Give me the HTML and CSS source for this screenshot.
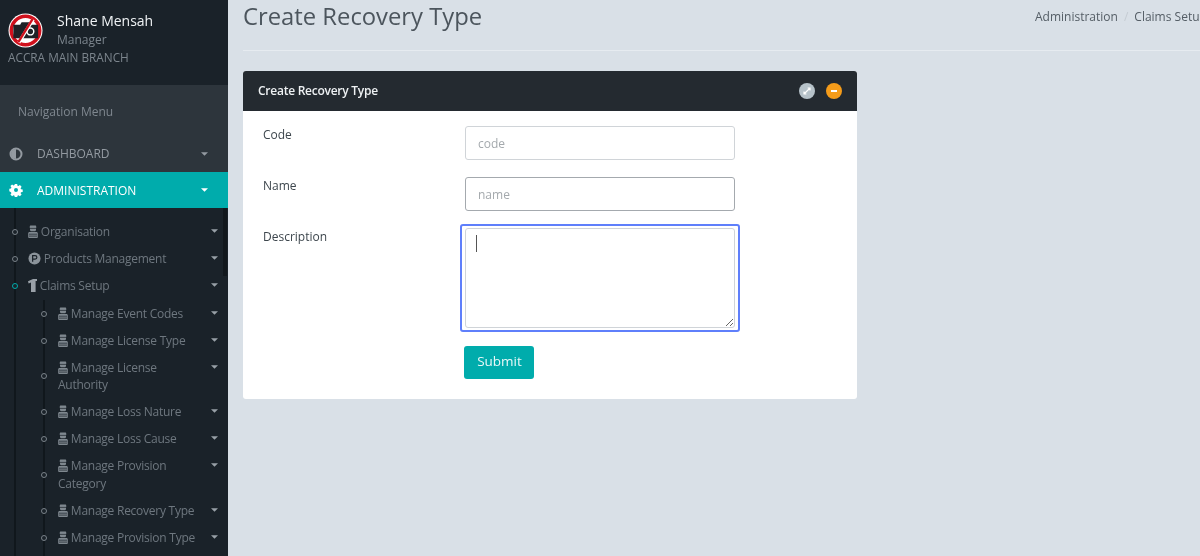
FILE: index.html
```html
<!DOCTYPE html>
<html lang="en">
<head>
<meta charset="utf-8">
<title>Create Recovery Type</title>
<link rel="stylesheet" href="styles.css">
</head>
<body>
<svg class="defs" width="0" height="0" aria-hidden="true">
  <symbol id="bust" viewBox="0 0 10 13">
    <path d="M2.200 0.600h5.600l.7 1.600-.5.5v2.600l-.8 1H2.800l-.8-1V2.700l-.5-.5zM1 7h8l.8 1v4.400l-.8.6H1l-.8-.6V8z" fill="currentColor"/>
    <path d="M2 3.400h6M1 9.200h8M1 11.100h8" stroke="#1a2229" stroke-width=".7"/>
  </symbol>
  <symbol id="caret" viewBox="0 0 8 4">
    <path d="M0 0h8L4 4z" fill="currentColor"/>
  </symbol>
</svg>
<div class="app">
  <aside class="sidebar">
    <div class="profile">
      <div class="profile-top">
        <svg class="avatar" viewBox="0 0 36 36" aria-hidden="true">
          <circle cx="18" cy="18" r="17.500" fill="#fff"/>
          <circle cx="18" cy="18" r="14.600" fill="#fff" stroke="#d0101c" stroke-width="3.600"/>
          <path d="M5.500 12h7l1.500-2.500h8l1.500 2.500h7.500v14h-25.500z" fill="#1f2227"/>
          <circle cx="23" cy="19" r="3.500" fill="none" stroke="#fff" stroke-width="1.500"/>
          <path d="M11.100 30.500L25.900 6.500" stroke="#fff" stroke-width="3.400"/>
          <path d="M10.600 30L25.400 6" stroke="#d0101c" stroke-width="2.400"/>
        </svg>
        <div class="who">
          <div class="who-name">Shane Mensah</div>
          <div class="who-role">Manager</div>
        </div>
      </div>
      <div class="branch">ACCRA MAIN BRANCH</div>
    </div>
    <div class="nav-top">
      <div class="nav-header">Navigation Menu</div>
      <div class="top-item">
        <svg class="top-icon" viewBox="0 0 14 14" aria-hidden="true">
          <circle cx="7" cy="7" r="5.500" fill="none" stroke="currentColor" stroke-width="2"/>
          <path d="M7 2a5 5 0 0 0 0 10z" fill="currentColor"/>
        </svg>
        <span class="top-label">DASHBOARD</span>
        <svg class="caret"><use href="#caret"/></svg>
      </div>
    </div>
    <div class="top-item active">
      <svg class="top-icon" viewBox="0 0 14 14" aria-hidden="true">
        <path fill="currentColor" fill-rule="evenodd" d="M5.800 1h2.400l.3 1.700 1 .4 1.400-1 1.700 1.700-1 1.400.4 1 1.700.3v2.400l-1.700.3-.4 1 1 1.400-1.700 1.700-1.400-1-1 .4-.3 1.700H5.800l-.3-1.700-1-.4-1.400 1-1.700-1.700 1-1.400-.4-1L.3 8.200V5.800L2 5.500l.4-1-1-1.400 1.700-1.700 1.400 1 1-.4zM7 5a2 2 0 1 0 0 4 2 2 0 0 0 0-4z"/>
      </svg>
      <span class="top-label">ADMINISTRATION</span>
      <svg class="caret"><use href="#caret"/></svg>
    </div>
    <div class="tree">
      <div class="row"><i class="dot"></i><div class="row-text"><svg class="bust"><use href="#bust"/></svg> Organisation</div><svg class="caret"><use href="#caret"/></svg></div>
      <div class="row"><i class="dot"></i><div class="row-text"><svg class="pin" viewBox="0 0 14 14" aria-hidden="true"><circle cx="7" cy="7" r="6.500" fill="currentColor"/><path d="M5 10.500V3.800h2.600a1.900 1.900 0 0 1 0 3.900H5" fill="none" stroke="#1a2229" stroke-width="1.300"/></svg> Products Management</div><svg class="caret"><use href="#caret"/></svg></div>
      <div class="row"><i class="dot on"></i><div class="row-text"><svg class="shirt" viewBox="0 0 9 13" aria-hidden="true"><path d="M0 2.200L5 0h4v2H7.600v11H3V3.600L.6 4.400z" fill="currentColor"/></svg> Claims Setup</div><svg class="caret"><use href="#caret"/></svg></div>
      <div class="sub">
        <div class="row"><i class="dot"></i><div class="row-text"><svg class="bust"><use href="#bust"/></svg> Manage Event Codes</div><svg class="caret"><use href="#caret"/></svg></div>
        <div class="row"><i class="dot"></i><div class="row-text"><svg class="bust"><use href="#bust"/></svg> Manage License Type</div><svg class="caret"><use href="#caret"/></svg></div>
        <div class="row"><i class="dot"></i><div class="row-text"><svg class="bust"><use href="#bust"/></svg> Manage License Authority</div><svg class="caret"><use href="#caret"/></svg></div>
        <div class="row"><i class="dot"></i><div class="row-text"><svg class="bust"><use href="#bust"/></svg> Manage Loss Nature</div><svg class="caret"><use href="#caret"/></svg></div>
        <div class="row"><i class="dot"></i><div class="row-text"><svg class="bust"><use href="#bust"/></svg> Manage Loss Cause</div><svg class="caret"><use href="#caret"/></svg></div>
        <div class="row"><i class="dot"></i><div class="row-text"><svg class="bust"><use href="#bust"/></svg> Manage Provision Category</div><svg class="caret"><use href="#caret"/></svg></div>
        <div class="row"><i class="dot"></i><div class="row-text"><svg class="bust"><use href="#bust"/></svg> Manage Recovery Type</div><svg class="caret"><use href="#caret"/></svg></div>
        <div class="row"><i class="dot"></i><div class="row-text"><svg class="bust"><use href="#bust"/></svg> Manage Provision Type</div><svg class="caret"><use href="#caret"/></svg></div>
      </div>
    </div>
    <div class="scrollbar"></div>
  </aside>
  <main class="content">
    <header class="page-head">
      <h1 class="page-title">Create Recovery Type</h1>
      <ol class="crumbs">
        <li>Administration</li>
        <li class="sep">/</li>
        <li>Claims Setup</li>
        <li class="sep">/</li>
        <li>Manage Recovery Type</li>
      </ol>
    </header>
    <section class="panel">
      <div class="panel-head">
        <h2 class="panel-title">Create Recovery Type</h2>
        <span class="tool tool-grey">
          <svg viewBox="0 0 10 10" aria-hidden="true"><path d="M2 8l6-6M5.600 2H8v2.400M2 5.600V8h2.400" fill="none" stroke="#fff" stroke-width="1.200"/></svg>
        </span>
        <span class="tool tool-orange">
          <svg viewBox="0 0 10 10" aria-hidden="true"><path d="M2 5h6" stroke="#fff" stroke-width="1.800"/></svg>
        </span>
      </div>
      <form class="panel-body">
        <div class="field">
          <label class="field-label" for="code">Code</label>
          <input class="control" id="code" type="text" placeholder="code">
        </div>
        <div class="field">
          <label class="field-label" for="name">Name</label>
          <input class="control control-hover" id="name" type="text" placeholder="name">
        </div>
        <div class="field">
          <label class="field-label" for="desc">Description</label>
          <div class="focus-ring"><textarea class="control area" id="desc"></textarea><i class="cursor"></i></div>
        </div>
        <div class="actions"><button class="submit" type="button">Submit</button></div>
      </form>
    </section>
  </main>
</div>
</body>
</html>
```
FILE: styles.css
```css
* { box-sizing: border-box; }
html, body { margin: 0; height: 100%; overflow: hidden; }
body {
  font-family: "Open Sans", "Noto Sans", sans-serif;
  font-size: 12px;
  color: #2d353c;
  background: #d9e0e7;
}
.defs { position: absolute; }
.app { display: flex; height: 556px; overflow: hidden; filter: blur(.5px); }

/* Sidebar */
.sidebar {
  position: relative;
  display: flex;
  flex-direction: column;
  flex: 0 0 228px;
  height: 556px;
  overflow: hidden;
  background: #1a2229;
}
.profile { flex: none; height: 85px; padding: 13px 0 0 8px; }
.profile-top { display: flex; }
.avatar { flex: none; width: 35px; height: 35px; }
.who { margin-left: 14px; margin-top: -1px; }
.who-name { font-size: 14px; line-height: 18px; color: #f0f3f5; }
.who-role { font-size: 12px; line-height: 20px; color: #7c858d; }
.branch { font-size: 11.8px; line-height: 16px; margin-top: -1px; color: #7c858d; }
.nav-top { flex: none; background: #2d353c; }
.nav-header { height: 50px; padding: 18px 0 0 18px; font-size: 12px; line-height: 18px; color: #7f878f; }
.top-item {
  display: flex;
  flex: none;
  align-items: center;
  height: 37px;
  padding: 0 20px 0 9px;
  color: #939aa1;
}
.top-item.active { height: 36px; background: #00acac; color: #fff; }
.top-icon { flex: none; width: 14px; height: 14px; }
.top-label { flex: 1; margin-left: 14px; font-size: 12px; }
.caret { flex: none; width: 7px; height: 4px; color: inherit; }

/* Tree */
.tree {
  position: relative;
  flex: 1 0 auto;
  padding-top: 10px;
  font-size: 12px;
  letter-spacing: -.25px;
  color: #6e777f;
}
.tree::before {
  content: "";
  position: absolute;
  left: 14px; top: 0; bottom: 0;
  width: 2px;
  background: #10171c;
}
.row {
  position: relative;
  display: flex;
  align-items: flex-start;
  padding: 4.75px 10px 4.75px 28px;
  line-height: 17.5px;
}
.row-text { flex: 1; min-width: 0; }
.sub .row-text { max-width: 143px; margin-right: auto; }
.row .caret { margin-top: 6px; color: #98a0a7; }
.sub { position: relative; margin-top: 1px; }
.sub::before {
  content: "";
  position: absolute;
  left: 43px; top: 0; bottom: -20px;
  width: 2px;
  background: #10171c;
}
.sub .row { padding-left: 58px; }
.dot {
  position: absolute;
  left: 12px; top: 50%;
  width: 6px; height: 6px;
  margin-top: -3px;
  border: 1.5px solid #7a838a;
  border-radius: 50%;
  background: #1a2229;
}
.dot.on { border-color: #00acac; }
.sub .dot { left: 41px; }
.bust { display: inline-block; width: 10px; height: 13px; vertical-align: -2px; color: #7f888f; }
.pin { display: inline-block; width: 13px; height: 13px; vertical-align: -2px; color: #8b939a; }
.shirt { display: inline-block; width: 9px; height: 13px; vertical-align: -2px; color: #9aa1a8; }
.scrollbar {
  position: absolute;
  right: 1px; top: 208px;
  width: 4px; height: 68px;
  background: #12181d;
}

/* Content */
.content { flex: 1; min-width: 0; padding: 0 0 0 15px; }
.page-head {
  display: flex;
  height: 51px;
  border-bottom: 1px solid #e6ebf0;
  white-space: nowrap;
}
.page-title {
  flex: 0 0 792px;
  margin: 0;
  font-size: 23.8px;
  font-weight: 400;
  line-height: 33px;
  color: #4c555d;
}
.crumbs {
  display: flex;
  flex: none;
  gap: 6px;
  margin: 0;
  padding: 8px 0 0;
  list-style: none;
  font-size: 12px;
  line-height: 18px;
  color: #545d65;
}
.crumbs .sep { color: #c5ccd3; }

.panel {
  width: 614px;
  margin-top: 20px;
  border-radius: 3px;
  background: #fff;
  overflow: hidden;
}
.panel-head {
  display: flex;
  align-items: center;
  gap: 11px;
  height: 40px;
  padding: 0 15px;
  background: #242a30;
}
.panel-title { flex: 1; margin: 0 0 1px; font-size: 12px; font-weight: 600; letter-spacing: -.25px; color: #eef1f3; }
.tool {
  display: flex;
  align-items: center;
  justify-content: center;
  width: 16px; height: 16px;
  border-radius: 50%;
}
.tool svg { width: 10px; height: 10px; }
.tool-grey { background: #b6c2c9; }
.tool-orange { background: #f59c1a; }
.panel-body { padding: 15px 0 20px 20px; }
.field { display: flex; align-items: flex-start; margin-bottom: 17px; }
.field:nth-child(3) { margin-bottom: 15px; }
.field-label { flex: 0 0 202px; line-height: 18px; color: #3d464d; }
.control {
  display: block;
  width: 270px;
  height: 34px;
  padding: 6px 12px;
  border: 1.5px solid #d0d4d8;
  border-radius: 3px;
  background: #fff;
  font: 12px "Open Sans", sans-serif;
  color: #555;
  outline: none;
}
.control::placeholder { color: #a4a9ad; opacity: 1; }
.control-hover { border-color: #a4a9ae; }
.focus-ring {
  position: relative;
  flex: none;
  margin: -4px 0 0 -5px;
  padding: 3px;
  width: 280px;
  height: 108px;
  border: 2.5px solid #5f7ffb;
  border-radius: 3px;
}
.area { width: 270px; height: 100px; margin: -1.5px 0 0 -.5px; resize: both; }
.cursor {
  position: absolute;
  left: 14px; top: 9px;
  width: 1px; height: 17px;
  background: #555;
}
.actions { padding-left: 201px; margin-top: -1px; }
.submit {
  width: 70px;
  height: 33px;
  padding: 0 0 3px 1px;
  border: 0;
  border-radius: 3px;
  background: #00acac;
  color: #e9f8f8;
  font: 13.5px "Open Sans", sans-serif;
}
```
